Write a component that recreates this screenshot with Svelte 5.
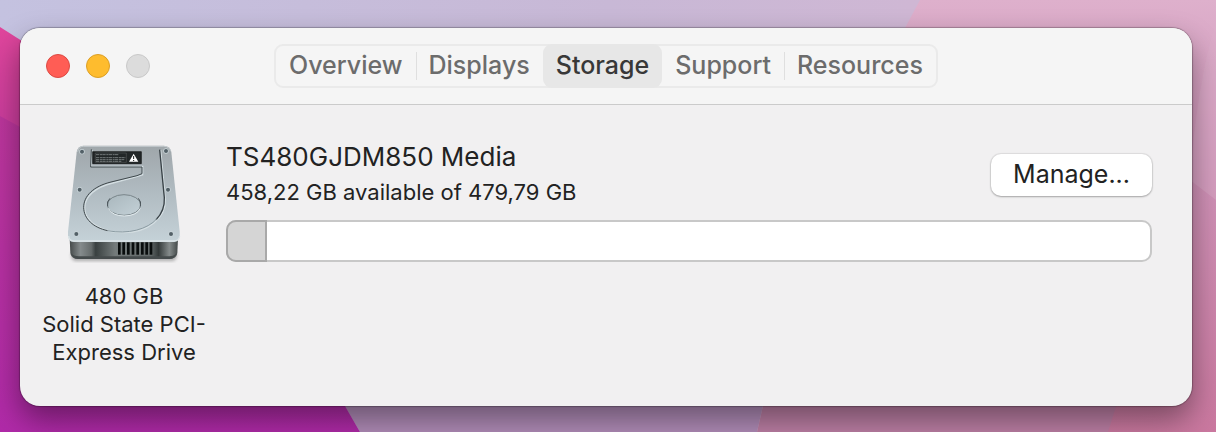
<script>
  const tabs = ["Overview", "Displays", "Storage", "Support", "Resources"];
  let active = "Storage";

  const drive = {
    name: "TS480GJDM850 Media",
    available: "458,22",
    total: "479,79",
    size: "480 GB",
    kind: "Solid State PCI-Express Drive"
  };

  const toNumber = s => parseFloat(s.replace(",", "."));
  $: used = (1 - toNumber(drive.available) / toNumber(drive.total)) * 100;

  const vents = [186, 199, 213, 227, 241, 255, 268, 281];
  const screws = [[78, 47], [330, 45], [71, 161], [336, 161], [61, 294], [345, 294]];
</script>

<div class="desktop">
  <svg class="wallpaper" viewBox="0 0 1216 432" preserveAspectRatio="none" aria-hidden="true">
    <defs>
      <linearGradient id="sky" x1="0" x2="1" y1="0" y2="0">
        <stop offset="0" stop-color="#c4c2e0" />
        <stop offset="0.5" stop-color="#c8b8d6" />
        <stop offset="1" stop-color="#d6b6d2" />
      </linearGradient>
      <linearGradient id="rose" x1="0" x2="0" y1="0" y2="1">
        <stop offset="0" stop-color="#deb0cc" />
        <stop offset="0.4" stop-color="#d093b8" />
        <stop offset="1" stop-color="#ca789f" />
      </linearGradient>
      <linearGradient id="magenta" x1="0" x2="0" y1="0" y2="1">
        <stop offset="0" stop-color="#e0469c" />
        <stop offset="1" stop-color="#c43a9c" />
      </linearGradient>
      <linearGradient id="violet" x1="0" x2="0" y1="0" y2="1">
        <stop offset="0" stop-color="#bc369c" />
        <stop offset="1" stop-color="#b02aa8" />
      </linearGradient>
    </defs>
    <rect width="1216" height="432" fill="url(#sky)" />
    <path d="M920 0H1216V432H800L905 28Z" fill="url(#rose)" />
    <path d="M1216 20V200L1190 180Q1196 90 1216 20Z" fill="#dcaecb" opacity="0.4" />
    <path d="M300 330H780L757 432H360Z" fill="#b18cb8" />
    <path d="M780 330H1140L1108 432H757Z" fill="#bd7fa5" />
    <path d="M0 27L22 41V150H0Z" fill="url(#magenta)" />
    <path d="M0 116L22 128V300H345V406L360 432H0Z" fill="url(#violet)" />
  </svg>

  <main class="window">
    <header class="toolbar">
      <div class="lights">
        <button class="light close" aria-label="Close"></button>
        <button class="light minimise" aria-label="Minimise"></button>
        <button class="light" aria-label="Zoom" disabled></button>
      </div>
      <nav class="tabs" role="tablist">
        {#each tabs as tab}
          <button
            role="tab"
            class:active={tab === active}
            aria-selected={tab === active}
            on:click={() => (active = tab)}
          >{tab}</button>
        {/each}
      </nav>
    </header>

    <section class="content">
      <div class="drive">
        <svg class="drive-icon" viewBox="0 0 408 408" aria-hidden="true">
          <defs>
            <linearGradient id="lid" x1="0" x2="0" y1="0" y2="1">
              <stop offset="0" stop-color="#9fa6aa" />
              <stop offset="0.5" stop-color="#b1bcc2" />
              <stop offset="1" stop-color="#c5d2d8" />
            </linearGradient>
            <linearGradient id="base" x1="0" x2="1" y1="0" y2="0">
              <stop offset="0" stop-color="#444949" />
              <stop offset="0.1" stop-color="#858b8c" />
              <stop offset="0.2" stop-color="#656b6b" />
              <stop offset="0.24" stop-color="#394040" />
              <stop offset="0.42" stop-color="#747b7b" />
              <stop offset="0.75" stop-color="#606767" />
              <stop offset="0.82" stop-color="#343a3a" />
              <stop offset="0.92" stop-color="#858b8b" />
              <stop offset="1" stop-color="#424848" />
            </linearGradient>
            <linearGradient id="hub" x1="0" x2="1" y1="0" y2="1">
              <stop offset="0" stop-color="#a9b7bd" />
              <stop offset="1" stop-color="#c4d1d7" />
            </linearGradient>
            <filter id="soft"><feGaussianBlur stdDeviation="4" /></filter>
          </defs>
          <rect x="45" y="342" width="318" height="34" rx="16" fill="#777" opacity="0.5" filter="url(#soft)" />
          <path d="M41 305H366L364 350Q362 368 343 369H64Q45 368 43 350Z" fill="url(#base)" />
          <path d="M46 352Q53 361 68 361H340Q354 361 361 352Q358 369 340 369H66Q49 369 46 352Z" fill="#454b4c" />
          {#each vents as x}
            <rect {x} y="319" width="8" height="37" fill="#090d0d" />
          {/each}
          <path d="M82 29H323Q343 29 346 49L371 286Q374 318 354 318H54Q33 318 36 287L62 49Q65 29 82 29Z" fill="url(#lid)" />
          <path d="M38 300Q39 315 54 315H354Q370 314 371 300" fill="none" stroke="#dce5e8" stroke-width="4" />
          <path d="M65 47Q68 31 82 31H323Q340 31 344 46" fill="none" stroke="#d5dce0" stroke-width="2" />
          <path d="M108 42L106 91H260V116L245 121L170 141C118 153 86 182 86 216C86 260 142 290 204 290C273 290 331 247 328 190L314 42" fill="none" stroke="#d4dee2" stroke-width="4" />
          <path d="M106 40L104 93H258V113L243 119L165 138C112 151 83 180 83 214C83 248 112 275 155 284" fill="none" stroke="#3f484c" stroke-width="3" />
          <path d="M311 41L325 185Q327 224 300 251" fill="none" stroke="#394247" stroke-width="4" />
          <path d="M155 284C215 296 275 280 303 248" fill="none" stroke="#8b9ba2" stroke-width="3" />
          <ellipse cx="204" cy="207" rx="50" ry="31" fill="url(#hub)" stroke="#79858a" stroke-width="3" />
          <path d="M157 217Q169 240 205 240Q243 239 253 217" fill="none" stroke="#e2ebee" stroke-width="3" />
          <path d="M155 211Q151 197 162 187M253 211Q257 197 247 187" fill="none" stroke="#4b555a" stroke-width="3" />
          <path d="M110 47H256V83H110Z" fill="#222728" stroke="#0c0e0e" stroke-width="2" />
          <path d="M118 51H211V79H118Z" fill="none" stroke="#7b8081" />
          <path d="M120 56H188M120 65H209M120 71H205M120 76H197" stroke="#9ca2a3" stroke-width="2" stroke-dasharray="10 2 6 1" />
          <path d="M233 53L247 77H219Z" fill="#fff" />
          <path d="M233 60V69M233 72V75" stroke="#171b1b" stroke-width="3" />
          {#each screws as [cx, cy]}
            <circle {cx} {cy} r="8" fill="#cbd6da" />
            <circle {cx} {cy} r="6" fill="#536067" />
          {/each}
        </svg>
        <p>{drive.size}<br />{drive.kind}</p>
      </div>

      <div class="details">
        <div class="summary">
          <div>
            <h1>{drive.name}</h1>
            <p>{drive.available} GB available of {drive.total} GB</p>
          </div>
          <button class="manage">Manage...</button>
        </div>
        <div class="bar" role="img" aria-label="Used space">
          <div class="used" style="width: {used}%"></div>
        </div>
      </div>
    </section>
  </main>
</div>

<style>
  :global(body) {
    margin: 0;
  }

  .desktop {
    position: relative;
    min-height: 100vh;
    box-sizing: border-box;
    padding: 28px 24px 26px 20px;
    overflow: hidden;
    font-family: Inter, "Liberation Sans", sans-serif;
    color: #222;
  }

  .wallpaper {
    position: absolute;
    inset: 0;
    width: 100%;
    height: 100%;
  }

  .window {
    position: relative;
    display: flex;
    flex-direction: column;
    min-height: calc(100vh - 54px);
    border-radius: 20px;
    background: #f1f0f1;
    box-shadow: 0 0 1px 1px rgba(0, 0, 0, 0.25), 0 14px 30px rgba(0, 0, 0, 0.4);
    overflow: hidden;
  }

  .toolbar {
    display: grid;
    grid-template-columns: 1fr auto 1fr;
    align-items: center;
    height: 76px;
    padding: 0 26px;
    background: #f5f5f5;
    border-bottom: 1px solid #cbcbcb;
  }

  .lights {
    display: flex;
    gap: 16px;
  }

  .light {
    width: 24px;
    height: 24px;
    padding: 0;
    border: 1px solid #c9c9c9;
    border-radius: 50%;
    background: #dcdcdc;
  }

  .close {
    background: #ff5d55;
    border-color: #dc4a43;
  }

  .minimise {
    background: #febc2e;
    border-color: #dc9f25;
  }

  .tabs {
    display: flex;
    height: 44px;
    box-sizing: border-box;
    border: 2px solid #eaeaea;
    border-radius: 9px;
  }

  .tabs button {
    position: relative;
    margin: -2px 0;
    padding: 0 13px 2px;
    border: 0;
    background: none;
    font: 500 25px/40px Inter, sans-serif;
    color: #6c6c6c;
  }

  /* hairline between two idle tabs */
  .tabs button:not(.active) + button:not(.active)::before {
    content: "";
    position: absolute;
    left: 0;
    top: 8px;
    bottom: 8px;
    width: 1px;
    background: #dfdfdf;
  }

  .tabs .active {
    border-radius: 9px;
    background: #e7e7e7;
    color: #383838;
  }

  .content {
    display: flex;
    gap: 18px;
    padding: 31px 40px 38px 20px;
  }

  .drive {
    flex: 0 0 168px;
    display: flex;
    flex-direction: column;
    align-items: center;
    gap: 10px;
  }

  .drive-icon {
    width: 136px;
    height: 136px;
  }

  p {
    margin: 0;
    font-size: 22px;
    line-height: 28px;
  }

  .drive p {
    text-align: center;
  }

  .details {
    flex: 1;
    min-width: 0;
    padding-top: 5px;
  }

  .summary {
    display: flex;
    justify-content: space-between;
    align-items: flex-end;
    margin-bottom: 14px;
  }

  h1 {
    margin: 0 0 5px;
    font-size: 26px;
    font-weight: 400;
    line-height: 32px;
  }

  .manage {
    height: 42px;
    margin-bottom: 10px;
    padding: 0 22px 2px;
    border: 0;
    border-radius: 10px;
    background: #fff;
    box-shadow: 0 0 1px 1px rgba(0, 0, 0, 0.08), 0 1px 2px rgba(0, 0, 0, 0.25);
    font: 400 25px/40px Inter, sans-serif;
    color: #222;
  }

  .bar {
    height: 42px;
    box-sizing: border-box;
    border: 2px solid #c8c8c8;
    border-radius: 10px;
    background: #fff;
  }

  .used {
    height: 42px;
    margin: -2px;
    box-sizing: border-box;
    border: 2px solid #a9a9a9;
    border-radius: 10px 0 0 10px;
    background: #d5d5d5;
  }
</style>
